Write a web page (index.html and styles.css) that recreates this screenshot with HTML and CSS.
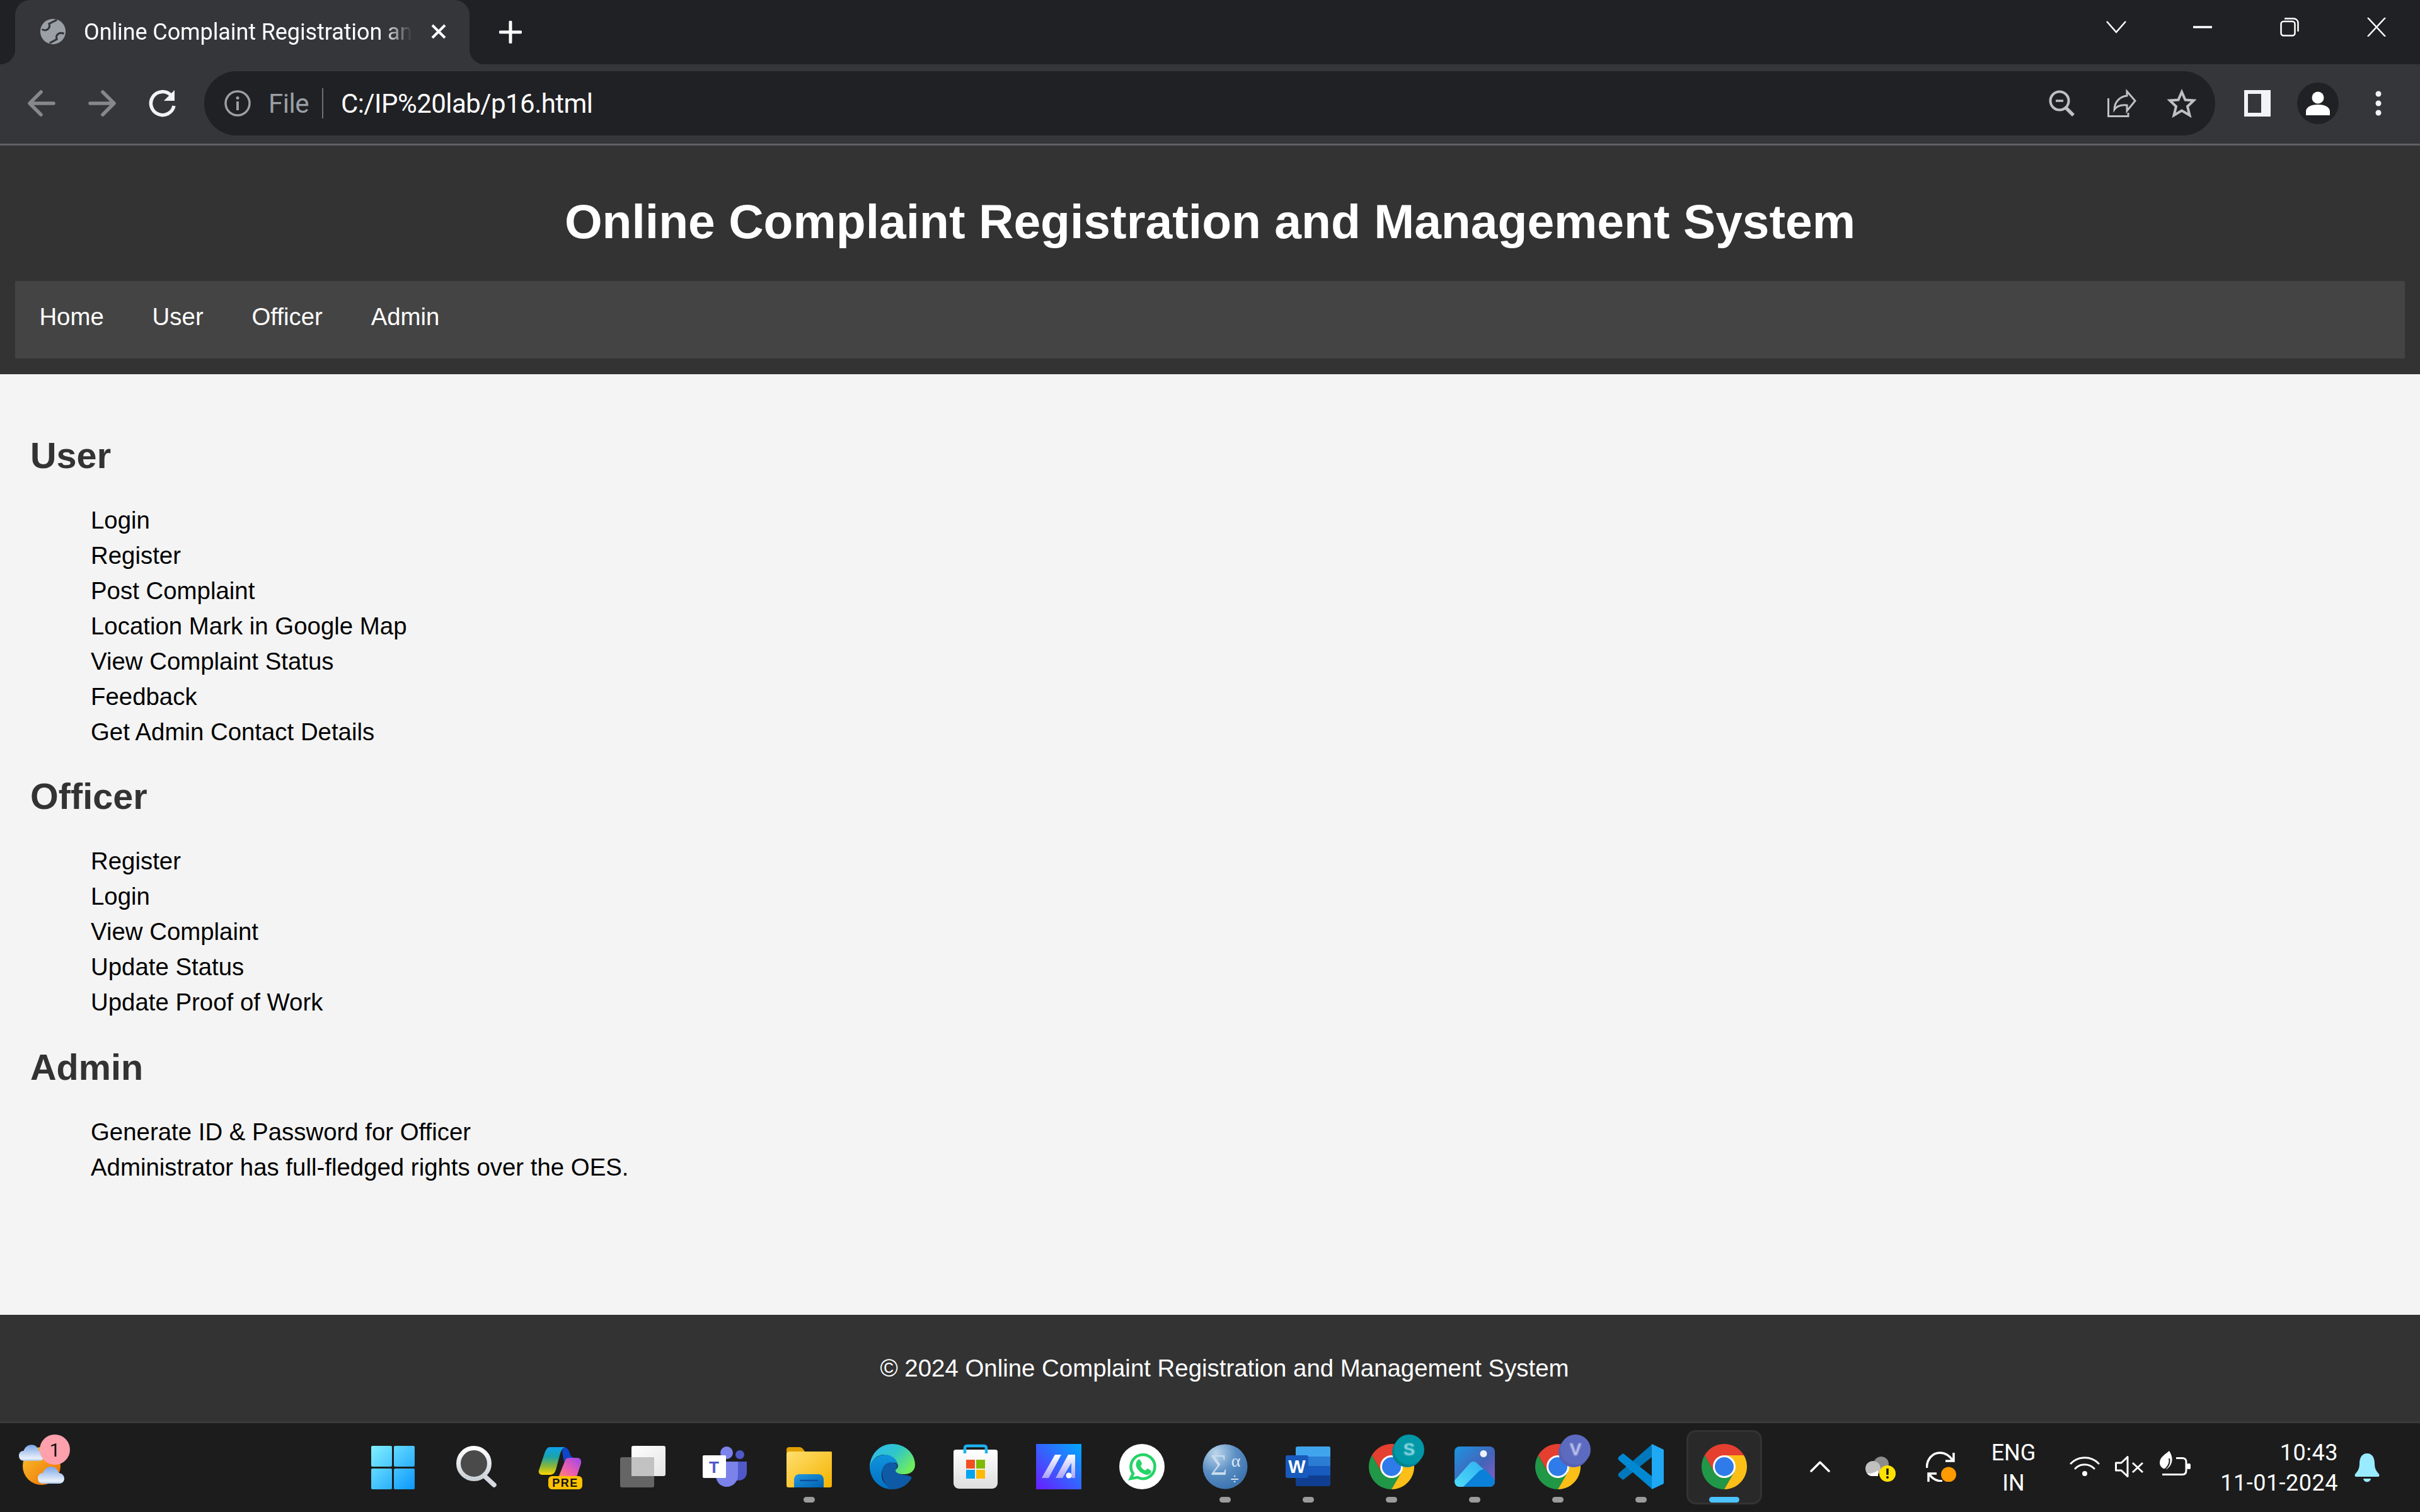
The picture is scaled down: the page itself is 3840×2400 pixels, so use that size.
FILE: index.html
```html
<!DOCTYPE html>
<html lang="en">
<head>
  <meta charset="UTF-8">
  <title>Online Complaint Registration and Management System</title>
  <link rel="stylesheet" href="styles.css">
</head>
<body>
  <svg class="defs" aria-hidden="true">
    <defs>
      <linearGradient id="gWin" gradientUnits="userSpaceOnUse" x1="0" y1="3" x2="70" y2="72"><stop offset="0" stop-color="#82f2ff"/><stop offset="1" stop-color="#0c98fc"/></linearGradient>
      <linearGradient id="gSearch" x1="0" y1="0" x2="0" y2="1"><stop offset="0" stop-color="#fff"/><stop offset="1" stop-color="#c9d0d6"/></linearGradient>
      <linearGradient id="gCopL" x1="0" y1="0" x2="0" y2="1"><stop offset="0" stop-color="#0da2ec"/><stop offset=".35" stop-color="#1ba3a8"/><stop offset=".68" stop-color="#84b63c"/><stop offset="1" stop-color="#ffd400"/></linearGradient>
      <linearGradient id="gCopR" x1="1" y1="0" x2="0" y2="1"><stop offset="0" stop-color="#9b46ee"/><stop offset=".55" stop-color="#ef60a8"/><stop offset="1" stop-color="#ff9a50"/></linearGradient>
      <linearGradient id="gTask" x1="0" y1="0" x2="1" y2="1"><stop offset="0" stop-color="#fff"/><stop offset="1" stop-color="#e4e4e4"/></linearGradient>
      <linearGradient id="gFolder" x1="0" y1="0" x2="1" y2="1"><stop offset="0" stop-color="#ffdf70"/><stop offset="1" stop-color="#f5b300"/></linearGradient>
      <linearGradient id="gFolderB" x1="0" y1="0" x2="1" y2="1"><stop offset="0" stop-color="#249ae0"/><stop offset="1" stop-color="#0060b0"/></linearGradient>
      <linearGradient id="gEdge" x1="0" y1="0" x2="1" y2=".6"><stop offset="0" stop-color="#2fb8f4"/><stop offset=".55" stop-color="#2fc6c8"/><stop offset="1" stop-color="#6eec60"/></linearGradient>
      <linearGradient id="gEdgeB" x1="0" y1="0" x2="0" y2="1"><stop offset="0" stop-color="#1094dc"/><stop offset="1" stop-color="#0070c4"/></linearGradient>
      <linearGradient id="gBag" x1="0" y1="0" x2="0" y2="1"><stop offset="0" stop-color="#fff"/><stop offset="1" stop-color="#dedede"/></linearGradient>
      <linearGradient id="gM" x1="0" y1="1" x2="1" y2="0"><stop offset="0" stop-color="#6b1cff"/><stop offset="1" stop-color="#00a9ff"/></linearGradient>
      <linearGradient id="gMs" x1="0" y1="0" x2="0" y2="1"><stop offset="0" stop-color="#fff"/><stop offset="1" stop-color="#a9a4f8"/></linearGradient>
      <radialGradient id="gSpss" cx=".3" cy=".2" r=".8"><stop offset="0" stop-color="#bcd6ea"/><stop offset=".55" stop-color="#5b8fc4"/><stop offset="1" stop-color="#3f76b0"/></radialGradient>
      <linearGradient id="gPhoto" x1="0" y1="0" x2="1" y2="1"><stop offset="0" stop-color="#1c94e2"/><stop offset=".55" stop-color="#4464b8"/><stop offset="1" stop-color="#8a5cc4"/></linearGradient>
      <linearGradient id="gPeak" x1="0" y1="1" x2="1" y2="0"><stop offset="0" stop-color="#4fdcfa"/><stop offset="1" stop-color="#2fb0f0"/></linearGradient>
      <linearGradient id="gSun" x1="0" y1="0" x2="1" y2="1"><stop offset="0" stop-color="#f8c530"/><stop offset="1" stop-color="#ef6a00"/></linearGradient>
      <linearGradient id="gCloud" x1="0" y1="0" x2="0" y2="1"><stop offset="0" stop-color="#7aa5e6"/><stop offset=".85" stop-color="#eaf1fb"/><stop offset="1" stop-color="#a9c4ea"/></linearGradient>
      <symbol id="chrome" viewBox="0 0 72 72">
        <path fill="#e53f30" d="M67.2 18A36 36 0 0 0 4.8 18L20.4 45 36 18Z"/>
        <path fill="#219748" d="M4.8 18A36 36 0 0 0 36 72L51.600 45H20.4Z"/>
        <path fill="#fbbf18" d="M36 72A36 36 0 0 0 67.2 18H36L51.600 45Z"/>
        <circle cx="36" cy="36" r="18" fill="#fff"/>
        <circle cx="36" cy="36" r="15" fill="#2f7bea"/>
      </symbol>
      <symbol id="cloud" viewBox="0 0 42 27">
        <path fill="url(#gCloud)" d="M8 27C2 27 0 22 0 18 0 13 4 10 8 10 10 4 15 0 21 0 28 0 32 5 33 10 38 10 42 14 42 19 42 24 38 27 34 27Z"/>
      </symbol>
    </defs>
  </svg>

  <div class="browser">
    <div class="tabstrip">
      <div class="tab">
        <svg class="favicon" viewBox="0 0 48 48"><circle cx="24" cy="24" r="23" fill="#9aa0a6"/><path fill="none" stroke="#35363a" stroke-width="3.500" d="M4 20C13 25 20 17 17 10L31 3M44 28C35 24 28 31 31 38L18 45"/></svg>
        <span class="tab-title">Online Complaint Registration an</span>
        <svg class="tab-close" viewBox="0 0 26 26"><path stroke="#fff" stroke-width="4" d="M3 3 23 23M23 3 3 23"/></svg>
      </div>
      <svg class="new-tab" viewBox="0 0 36 36"><path stroke="#fff" stroke-width="5" stroke-linecap="round" d="M18 2V34M2 18H34"/></svg>
      <div class="win-controls">
        <div class="win-btn wide"><svg width="32" height="20" viewBox="0 0 32 20"><path fill="none" stroke="#fff" stroke-width="2.500" d="M1 1 16 18 31 1"/></svg></div>
        <div class="win-btn"><svg width="30" height="4" viewBox="0 0 30 4"><path stroke="#fff" stroke-width="3.500" d="M0 2H30"/></svg></div>
        <div class="win-btn"><svg width="30" height="30" viewBox="0 0 30 30"><rect x="1.500" y="6" width="22" height="22.500" rx="4" fill="none" stroke="#fff" stroke-width="2.500"/><path fill="none" stroke="#fff" stroke-width="2.500" d="M7 1.500H21C25.500 1.500 28.500 4.500 28.500 9V22"/></svg></div>
        <div class="win-btn"><svg width="30" height="30" viewBox="0 0 30 30"><path stroke="#fff" stroke-width="2.500" d="M1 0 29 30M29 0 1 30"/></svg></div>
      </div>
    </div>

    <div class="toolbar">
      <div class="tool-btn"><svg class="ico48" viewBox="0 0 48 48"><path fill="none" stroke="#87888b" stroke-width="5.500" stroke-linecap="round" stroke-linejoin="round" d="M43 24H6M23 6 5 24 23 42"/></svg></div>
      <div class="tool-btn"><svg class="ico48" viewBox="0 0 48 48"><path fill="none" stroke="#87888b" stroke-width="5.500" stroke-linecap="round" stroke-linejoin="round" d="M5 24H42M25 6 43 24 25 42"/></svg></div>
      <div class="tool-btn"><svg class="ico48" viewBox="0 0 48 48"><path fill="none" stroke="#f1f3f4" stroke-width="5.500" d="M37 11A18.500 18.500 0 1 0 42 28"/><path fill="#f1f3f4" d="M43 3V20H26Z"/></svg></div>
      <div class="omnibox">
        <svg class="info-ico" viewBox="0 0 44 44"><circle cx="22" cy="22" r="19" fill="none" stroke="#9aa0a6" stroke-width="3.500"/><circle cx="22" cy="13.500" r="2.500" fill="#9aa0a6"/><path stroke="#9aa0a6" stroke-width="4" d="M22 19V33"/></svg>
        <span class="scheme">File</span>
        <span class="divider"></span>
        <span class="url">C:/IP%20lab/p16.html</span>
        <div class="omni-actions">
          <div class="tool-btn"><svg class="ico48" viewBox="0 0 48 48"><circle cx="22" cy="20" r="14.500" fill="none" stroke="#bdc1c6" stroke-width="4"/><path stroke="#bdc1c6" stroke-width="3.500" d="M16 20H28"/><path stroke="#bdc1c6" stroke-width="5.500" d="M31 30 44 43"/></svg></div>
          <div class="tool-btn"><svg class="ico48" viewBox="0 0 48 48"><path fill="none" stroke="#bdc1c6" stroke-width="3" d="M3.500 16V44.500H35V39M33 5 46 20 33 36V27C24 26 17 28 13 34 13 22 22 13 33 12Z"/></svg></div>
          <div class="tool-btn"><svg class="ico48" viewBox="0 0 48 48"><path fill="none" stroke="#bdc1c6" stroke-width="4" d="M24 6 29.500 18.500 43 19.500 33 29 36.500 43 24 35.500 11.500 43 15 29 5 19.500 18.500 18.500Z"/></svg></div>
        </div>
      </div>
      <div class="tool-btn"><svg width="42" height="42" viewBox="0 0 42 42"><path fill="#f1f3f4" fill-rule="evenodd" d="M0 0H42V42H0ZM6 6V36H27V6Z"/></svg></div>
      <div class="tool-btn"><svg width="66" height="66" viewBox="0 0 66 66"><circle cx="33" cy="33" r="33" fill="#202124"/><circle cx="33" cy="24" r="9.500" fill="#fff"/><path fill="#fff" d="M14 52V46C14 38 24 35 33 35S52 38 52 46V52Z"/></svg></div>
      <div class="tool-btn"><svg width="12" height="42" viewBox="0 0 12 42"><circle cx="6" cy="6" r="4.500" fill="#f1f3f4"/><circle cx="6" cy="21" r="4.500" fill="#f1f3f4"/><circle cx="6" cy="36" r="4.500" fill="#f1f3f4"/></svg></div>
    </div>
  </div>

  <header class="site-header">
    <h1>Online Complaint Registration and Management System</h1>
    <nav class="site-nav">
      <a href="#">Home</a>
      <a href="#">User</a>
      <a href="#">Officer</a>
      <a href="#">Admin</a>
    </nav>
  </header>

  <main class="content">
    <h2>User</h2>
    <ul>
      <li>Login</li>
      <li>Register</li>
      <li>Post Complaint</li>
      <li>Location Mark in Google Map</li>
      <li>View Complaint Status</li>
      <li>Feedback</li>
      <li>Get Admin Contact Details</li>
    </ul>
    <h2>Officer</h2>
    <ul>
      <li>Register</li>
      <li>Login</li>
      <li>View Complaint</li>
      <li>Update Status</li>
      <li>Update Proof of Work</li>
    </ul>
    <h2>Admin</h2>
    <ul>
      <li>Generate ID &amp; Password for Officer</li>
      <li>Administrator has full-fledged rights over the OES.</li>
    </ul>
  </main>

  <footer class="site-footer">&copy; 2024 Online Complaint Registration and Management System</footer>

  <div class="taskbar">
    <div class="weather">
      <svg class="app-ico" viewBox="0 0 72 72">
        <circle cx="36" cy="35" r="30" fill="url(#gSun)"/>
        <use href="#cloud" x="0" y="1" width="40" height="26"/>
        <use href="#cloud" x="30" y="36" width="42" height="27"/>
      </svg>
      <span class="count-badge">1</span>
    </div>

    <div class="apps">
      <div class="slot">
        <svg class="app-ico" viewBox="0 0 72 72"><g fill="url(#gWin)"><rect x="1" y="3" width="33" height="33" rx="2"/><rect x="37" y="3" width="33" height="33" rx="2"/><rect x="1" y="39" width="33" height="33" rx="2"/><rect x="37" y="39" width="33" height="33" rx="2"/></g></svg>
      </div>
      <div class="slot">
        <svg class="app-ico" viewBox="0 0 72 72"><circle cx="32" cy="31" r="24.500" fill="#4a4a4a" stroke="url(#gSearch)" stroke-width="7"/><path stroke="#d4dadf" stroke-width="7.500" stroke-linecap="round" d="M50 52 64 65"/></svg>
      </div>
      <div class="slot">
        <svg class="app-ico" viewBox="0 0 72 72">
          <path fill="#0f45c8" d="M42 5C47 5 50 8 52 14 53 19 56 22 60 22H50C46 22 44 26 43 29L40 12Z"/>
          <path fill="url(#gCopR)" d="M50 22H64C69 22 71 26 70 31L62 55H27C32 55 35 52 36 48L44 28C45 24 47 22 50 22Z"/>
          <path fill="url(#gCopL)" d="M20 5H44C40 7 38 12 37 15L30 41C28 47 25 49 20 49H8C4 49 2 45 3 42L12 15C14 9 17 5 20 5Z"/>
          <rect x="18" y="51" width="54" height="21" rx="6" fill="#fdc000"/>
          <text class="pre-label" x="45" y="68" text-anchor="middle">PRE</text>
        </svg>
      </div>
      <div class="slot">
        <svg class="app-ico" viewBox="0 0 72 72"><rect x="18" y="3" width="54" height="48" rx="3" fill="url(#gTask)"/><rect x="0" y="21" width="54" height="48" rx="3" fill="#656565"/><rect x="18" y="21" width="36" height="30" fill="#c2c2c2"/></svg>
      </div>
      <div class="slot">
        <svg class="app-ico" viewBox="0 0 72 72">
          <circle cx="37" cy="14" r="10" fill="#7b83eb"/><circle cx="58" cy="17" r="7" fill="#5059c9"/>
          <path fill="#5059c9" d="M50 28H69V45C69 53 63 58 56 58H50Z"/>
          <path fill="#7b83eb" d="M20 28H55V50C55 60 47 68 37 68S20 60 20 50Z"/>
          <rect x="-1" y="18" width="37" height="36" rx="2" fill="#fff"/>
          <text class="teams-label" x="17" y="46" text-anchor="middle">T</text>
        </svg>
      </div>
      <div class="slot">
        <svg class="app-ico" viewBox="0 0 72 72">
          <path fill="#e0a000" d="M0 9C0 6 2 5 4 5H20C24 5 26 7 29 12H72V20H0Z"/>
          <path fill="url(#gFolder)" d="M0 17C0 14 2 12 4 12H29L69 12C71 12 72 14 72 16V66C72 68 71 69 69 69H3C1 69 0 68 0 66Z"/>
          <path fill="url(#gFolderB)" d="M12 57C12 52 15 48 20 48H51C56 48 59 52 59 57V69H12Z"/>
          <path stroke="#0b4f9e" stroke-width="2.500" d="M21 58H50"/>
        </svg>
        <span class="dot"></span>
      </div>
      <div class="slot">
        <svg class="app-ico" viewBox="0 0 72 72">
          <path fill="url(#gEdgeB)" d="M0 36C0 56 16 72 36 72 28 68 18 60 19 46 20 36 30 28 40 30 44 31 45 34 45 36 44 24 36 16 24 17 12 18 2 26 0 36Z"/>
          <path fill="#0e5aa6" d="M20 41C22 30 34 26 42 32 45 34 44 37 42 39 40 41 41 44 44 46 50 50 60 48 67 53 62 64 50 72 36 72 26 70 18 54 20 41Z"/>
          <path fill="url(#gEdge)" d="M36 0C56 0 72 15 72 33 72 42 65 48 55 48 47 48 41 46 41 42 41 40 44 39 45 36 45 26 36 17 24 17 12 17 3 25 0 36 1 16 16 0 36 0Z"/>
        </svg>
      </div>
      <div class="slot">
        <svg class="app-ico" viewBox="0 0 72 72">
          <path fill="url(#gBag)" d="M1 12C1 10 3 9 5 9H67C69 9 71 10 71 12V62C71 67 67 71 62 71H10C5 71 1 67 1 62Z"/>
          <path fill="none" stroke="#1cb2f0" stroke-width="4.500" d="M19 15V7C19 4 20 3 23 3H49C52 3 53 4 53 7V15"/>
          <rect x="21" y="25" width="14" height="14" fill="#f25022"/><rect x="37" y="25" width="14" height="14" fill="#7fba00"/>
          <rect x="21" y="41" width="14" height="14" fill="#00a4ef"/><rect x="37" y="41" width="14" height="14" fill="#ffb900"/>
        </svg>
      </div>
      <div class="slot">
        <svg class="app-ico" viewBox="0 0 72 72">
          <rect width="72" height="72" fill="url(#gM)"/>
          <path fill="url(#gMs)" d="M9 54 30 17H40L20 54ZM31 54 51 17H62V54H56V30L42 54Z"/>
          <circle cx="52" cy="50" r="4.500" fill="#fff"/>
        </svg>
      </div>
      <div class="slot">
        <svg class="app-ico" viewBox="0 0 72 72">
          <circle cx="36" cy="36" r="36" fill="#fff"/>
          <path fill="none" stroke="#25d366" stroke-width="4.500" d="M22 47A19 19 0 1 1 29 53L18 55Z"/>
          <path fill="#25d366" d="M30 25C32 24 33 25 34 27L36 31C36 33 34 34 34 35 35 38 39 41 41 42 43 41 44 39 45 39L50 42C51 43 51 44 50 46 47 49 44 50 40 48 34 46 29 41 27 36 26 32 27 27 30 25Z"/>
        </svg>
      </div>
      <div class="slot">
        <svg class="app-ico" viewBox="0 0 72 72">
          <circle cx="36" cy="36" r="35.500" fill="url(#gSpss)"/>
          <text class="spss-sigma" x="26" y="49" text-anchor="middle">&#931;</text>
          <text class="spss-alpha" x="53" y="36" text-anchor="middle">&#945;</text>
          <text class="spss-div" x="51" y="64" text-anchor="middle">&#247;</text>
        </svg>
        <span class="dot"></span>
      </div>
      <div class="slot">
        <svg class="app-ico" viewBox="0 0 72 72">
          <path fill="#41a5ee" d="M19 4H69C70 4 71 5 71 6V20H16V6C16 5 18 4 19 4Z"/>
          <rect x="16" y="20" width="55" height="15" fill="#2b7cd3"/><rect x="16" y="35" width="55" height="15" fill="#185abd"/>
          <path fill="#103f91" d="M16 50H71V65C71 66 70 67 69 67H19C18 67 16 66 16 65Z"/>
          <rect x="0" y="18" width="36" height="36" rx="3" fill="#185abd"/>
          <text class="word-label" x="18" y="46" text-anchor="middle">W</text>
        </svg>
        <span class="dot"></span>
      </div>
      <div class="slot">
        <svg class="app-ico" viewBox="0 0 72 72"><use href="#chrome"/></svg>
        <span class="dot"></span>
        <span class="profile-badge teal"><span>S</span></span>
      </div>
      <div class="slot">
        <svg class="app-ico" viewBox="0 0 72 72">
          <rect x="4" y="4" width="64" height="64" rx="8" fill="url(#gPhoto)"/>
          <circle cx="50" cy="15.500" r="5.500" fill="#eef1f8"/>
          <path fill="url(#gPeak)" d="M4 58 28 31C31 27 37 27 40 31L50 40 18 68H12C7 68 4 64 4 58Z"/>
          <path fill="#0a80d8" d="M18 68 42 44C46 40 51 39 55 43L68 57V60C68 65 64 68 60 68Z"/>
        </svg>
        <span class="dot"></span>
      </div>
      <div class="slot">
        <svg class="app-ico" viewBox="0 0 72 72"><use href="#chrome"/></svg>
        <span class="dot"></span>
        <span class="profile-badge indigo"><span>V</span></span>
      </div>
      <div class="slot">
        <svg class="app-ico" viewBox="0 0 72 72">
          <path fill="#0078bb" d="M54 0 1 46C-1 48-1 50 1 52L6 56C7 57 8 57 9 56L54 20Z"/>
          <path fill="#0089d2" d="M54 72 1 26C-1 24-1 22 1 20L6 16C7 15 8 15 9 16L54 52Z"/>
          <path fill="#1fa8f3" d="M53 0 71 8.500C72 9 72 10 72 11V61C72 62 72 63 71 63.500L53 72Z"/>
        </svg>
        <span class="dot"></span>
      </div>
      <div class="slot active">
        <svg class="app-ico" viewBox="0 0 72 72"><use href="#chrome"/></svg>
        <span class="dot long"></span>
      </div>
    </div>

    <div class="tray">
      <svg class="t-chevron" viewBox="0 0 32 18"><path fill="none" stroke="#fff" stroke-width="3.500" stroke-linecap="round" stroke-linejoin="round" d="M2 16 16 2 30 16"/></svg>
      <svg class="t-cloud" viewBox="0 0 48 40"><circle cx="25" cy="12" r="12" fill="#8c8c8c"/><circle cx="12" cy="19" r="12" fill="#c0c0c0"/><path fill="#fff" d="M2 26C6 28 12 27 20 22V31H12C7 31 4 29 2 26Z"/><circle cx="35" cy="27" r="13" fill="#ffe100"/><path stroke="#111" stroke-width="3.500" d="M35 19V29"/><circle cx="35" cy="33" r="2" fill="#111"/></svg>
      <svg class="t-sync" viewBox="0 0 48 48"><path fill="none" stroke="#fff" stroke-width="3.500" d="M1.500 26C1 12 11 2 22 2 31 2 38 7 43 15M44 2V15H31M26 47C17 47 11 44 6 37M17 35H4V48"/><circle cx="36" cy="36.500" r="12" fill="#ff9a00"/></svg>
      <div class="t-lang"><span>ENG</span><span>IN</span></div>
      <svg class="t-wifi" viewBox="0 0 48 34"><path fill="none" stroke="#fff" stroke-width="3" stroke-linecap="round" d="M2 13A31 31 0 0 1 46 13M9 21A21 21 0 0 1 39 21"/><circle cx="24" cy="29" r="4" fill="#fff"/></svg>
      <svg class="t-volume" viewBox="0 0 46 34"><path fill="none" stroke="#fff" stroke-width="3" stroke-linejoin="round" d="M1.500 11H10L20 1.500V32.500L10 23H1.500Z"/><path stroke="#fff" stroke-width="3" d="M28 11 44 26M44 11 28 26"/></svg>
      <svg class="t-battery" viewBox="0 0 49 40"><path fill="none" stroke="#fff" stroke-width="3" d="M26 11.500H36C40 11.500 42 14 42 17V31C42 35 40 37.500 36 37.500H4"/><rect x="43" y="20" width="6" height="9" rx="2" fill="#fff"/><path fill="#fff" d="M15 0C8 6 0 10 0 19 0 25 5 29 11 29 20 23 23 12 15 0Z"/><path fill="none" stroke="#1c1c1c" stroke-width="2" d="M15 12C17 20 14 26 4 32"/></svg>
      <div class="t-clock"><span>10:43</span><span>11-01-2024</span></div>
      <svg class="t-bell" viewBox="0 0 40 46"><path fill="#99ebff" d="M20 0C11 0 8 8 8 16 8 26 4 29 1 33 0 36 1 37 3 37H37C39 37 40 36 39 33 36 29 32 26 32 16 32 8 29 0 20 0ZM14 40H26C25 47 15 47 14 40Z"/></svg>
    </div>
  </div>
</body>
</html>
```

FILE: styles.css
```css
* {
  box-sizing: border-box;
}

body {
  margin: 0;
  height: 2400px;
  display: flex;
  flex-direction: column;
  font-family: "Liberation Sans", Arial, sans-serif;
  overflow: hidden;
}

.defs {
  position: absolute;
  width: 0;
  height: 0;
}

/* browser chrome */
.browser {
  flex: none;
  font-family: Roboto, "Noto Sans", sans-serif;
  color: #fff;
}

.tabstrip {
  height: 102px;
  padding-left: 24px;
  display: flex;
  align-items: flex-start;
  background-color: #202124;
}

.tab {
  position: relative;
  width: 721px;
  height: 102px;
  padding: 0 36px 0 39px;
  display: flex;
  align-items: center;
  background-color: #35363a;
  border-radius: 24px 24px 0 0;
}

.tab::before,
.tab::after {
  content: "";
  position: absolute;
  bottom: 0;
  width: 24px;
  height: 24px;
}

.tab::before {
  left: -24px;
  background: radial-gradient(circle at 0 0, transparent 24px, #35363a 24.5px);
}

.tab::after {
  right: -24px;
  background: radial-gradient(circle at 100% 0, transparent 24px, #35363a 24.5px);
}

.favicon {
  width: 42px;
  height: 42px;
  flex: none;
  margin-top: -3px;
}

.tab-title {
  margin-left: 28px;
  flex: none;
  font-size: 36px;
  letter-spacing: -0.1px;
  white-space: nowrap;
  -webkit-mask-image: linear-gradient(to right, #000 91%, transparent 100%);
  mask-image: linear-gradient(to right, #000 91%, transparent 100%);
}

.tab-close {
  width: 26px;
  height: 26px;
  margin: -3px 0 0 auto;
  flex: none;
}

.new-tab {
  width: 36px;
  height: 36px;
  margin: 33px 0 0 47px;
}

.win-controls {
  margin-left: auto;
  display: flex;
}

.win-btn {
  width: 138px;
  height: 86px;
  display: flex;
  align-items: center;
  justify-content: center;
}

.win-btn.wide {
  width: 136px;
}

.toolbar {
  height: 129px;
  padding: 12px 18px 15px;
  display: flex;
  align-items: center;
  background-color: #35363a;
  border-bottom: 3px solid #5f6064;
}

.tool-btn {
  width: 96px;
  height: 102px;
  flex: none;
  display: flex;
  align-items: center;
  justify-content: center;
}

.ico48 {
  width: 48px;
  height: 48px;
}

.omnibox {
  width: 3191px;
  height: 102px;
  margin: 0 19px 0 18px;
  padding: 0 5px 0 31px;
  display: flex;
  align-items: center;
  background-color: #202124;
  border-radius: 51px;
}

.info-ico {
  width: 44px;
  height: 44px;
  flex: none;
}

.scheme {
  margin: 2px 0 0 27px;
  font-size: 42px;
  letter-spacing: -0.5px;
  color: #9aa0a6;
}

.divider {
  width: 2px;
  height: 48px;
  margin-left: 21px;
  background-color: #6f7074;
}

.url {
  margin: 2px 0 0 28px;
  font-size: 42px;
  letter-spacing: -0.55px;
}

.omni-actions {
  margin-left: auto;
  display: flex;
}

/* page */
.site-header {
  flex: none;
  height: 363px;
  padding: 24px;
  background-color: #333;
  color: #fff;
  text-align: center;
}

.site-header h1 {
  margin: 51.5px 0;
  font-size: 76.8px;
  line-height: 88px;
}

.site-nav {
  height: 123px;
  padding: 35px 38.4px 0;
  display: flex;
  gap: 76.8px;
  background-color: #444;
  text-align: left;
}

.site-nav a {
  color: #fff;
  font-size: 38.4px;
  line-height: 44px;
  text-decoration: none;
}

.content {
  flex: 1;
  padding: 48px;
  background-color: #f4f4f4;
}

.content h2 {
  margin: 47.8px 0;
  font-size: 57.6px;
  line-height: 66px;
  color: #333;
}

.content ul {
  margin: 38.4px 0;
  padding-left: 96px;
  list-style: none;
}

.content li {
  margin-bottom: 12px;
  font-size: 38.4px;
  line-height: 44px;
}

.site-footer {
  flex: none;
  height: 169px;
  padding-left: 46px;
  display: flex;
  align-items: center;
  justify-content: center;
  background-color: #333;
  color: #fff;
  font-size: 38.4px;
}

/* windows taskbar */
.taskbar {
  flex: none;
  height: 144px;
  display: flex;
  background-color: #1c1c1c;
  border-top: 3px solid #3a3a3a;
  font-family: Roboto, "Noto Sans", sans-serif;
  color: #fff;
}

.weather {
  position: relative;
  width: 558px;
  padding: 33px 0 0 30px;
}

.count-badge {
  position: absolute;
  left: 63px;
  top: 18px;
  width: 48px;
  height: 48px;
  display: flex;
  align-items: center;
  justify-content: center;
  border-radius: 50%;
  background-color: #ffa0ad;
  color: #111;
  font-size: 30px;
}

.app-ico {
  display: block;
  width: 72px;
  height: 72px;
  flex: none;
  overflow: visible;
}

.apps {
  display: flex;
}

.slot {
  position: relative;
  width: 132px;
  height: 141px;
  padding-top: 33px;
  display: flex;
  flex-direction: column;
  align-items: center;
}

.slot.active {
  width: 120px;
  height: 118px;
  margin: 11px 6px 0;
  padding-top: 19px;
  background-color: #292929;
  border: 3px solid #333;
  border-radius: 15px;
}

.dot {
  width: 18px;
  height: 9px;
  margin-top: 12px;
  border-radius: 5px;
  background-color: #9b9b9b;
}

.dot.long {
  width: 48px;
  background-color: #4cc2ff;
}

.profile-badge {
  position: absolute;
  left: 70px;
  top: 18px;
  width: 48px;
  height: 48px;
  display: flex;
  align-items: center;
  justify-content: center;
  border-radius: 50%;
  font-family: "Liberation Sans", sans-serif;
  font-size: 28px;
  font-weight: bold;
}

.profile-badge span {
  filter: blur(0.8px);
}

.profile-badge.teal {
  background-color: #0097a7;
  box-shadow: -3px 4px 0 #00838f;
  color: #9adde4;
}

.profile-badge.indigo {
  background-color: #5c6bc0;
  box-shadow: -3px 4px 0 #5561b4;
  color: #c5cbef;
}

.pre-label {
  font-family: "Liberation Sans", sans-serif;
  font-size: 18px;
  font-weight: bold;
  letter-spacing: 1.5px;
  fill: #111;
}

.teams-label {
  font-family: "Liberation Sans", sans-serif;
  font-size: 26px;
  font-weight: bold;
  fill: #5059c9;
}

.word-label {
  font-family: "Liberation Sans", sans-serif;
  font-size: 29px;
  font-weight: bold;
  fill: #fff;
}

.spss-sigma {
  font-family: "Liberation Serif", serif;
  font-size: 46px;
  fill: #c9dcec;
}

.spss-alpha {
  font-family: "Liberation Serif", serif;
  font-size: 28px;
  fill: #dbe8f3;
}

.spss-div {
  font-family: "Liberation Sans", sans-serif;
  font-size: 24px;
  fill: #dbe8f3;
}

.tray {
  display: flex;
  align-items: center;
  height: 141px;
}

.t-chevron {
  width: 32px;
  height: 18px;
  margin-left: 70px;
  margin-top: -4px;
}

.t-cloud {
  width: 48px;
  height: 40px;
  margin-left: 56px;
  margin-top: 4px;
}

.t-sync {
  width: 48px;
  height: 48px;
  margin-left: 48px;
  margin-top: -3px;
}

.t-lang {
  width: 120px;
  margin-left: 31px;
  display: flex;
  flex-direction: column;
  align-items: center;
  font-size: 36px;
  line-height: 48px;
}

.t-wifi {
  width: 48px;
  height: 34px;
  margin-left: 29px;
  margin-top: -5px;
}

.t-volume {
  width: 46px;
  height: 34px;
  margin-left: 24px;
  margin-top: -3px;
}

.t-battery {
  width: 49px;
  height: 40px;
  margin-left: 25px;
  margin-top: -13px;
}

.t-clock {
  width: 205px;
  margin-left: 29px;
  display: flex;
  flex-direction: column;
  align-items: flex-end;
  font-size: 36px;
  letter-spacing: 0.5px;
  line-height: 48px;
  white-space: nowrap;
}

.t-bell {
  width: 40px;
  height: 46px;
  margin-left: 26px;
}
```
